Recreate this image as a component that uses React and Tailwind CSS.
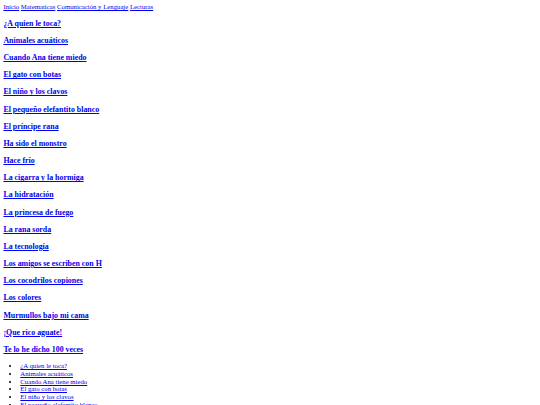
const lecturas = [
  '¿A quien le toca?',
  'Animales acuáticos',
  'Cuando Ana tiene miedo',
  'El gato con botas',
  'El niño y los clavos',
  'El pequeño elefantito blanco',
  'El príncipe rana',
  'Ha sido el monstro',
  'Hace frío',
  'La cigarra y la hormiga',
  'La hidratación',
  'La princesa de fuego',
  'La rana sorda',
  'La tecnología',
  'Los amigos se escriben con H',
  'Los cocodrilos copiones',
  'Los colores',
  'Murmullos bajo mi cama',
  '¡Que rico aguate!',
  'Te lo he dicho 100 veces',
];

const menu = ['Inicio', 'Matematicas', 'Comunicación y Lenguaje', 'Lecturas'];

export default function App() {
  return (
    <div className="min-h-[405px] bg-white p-[3.4px] font-['Liberation_Serif','Times_New_Roman',serif] text-black text-[6.75px] leading-[7.76px]">
      <nav className="flex gap-[1.7px]">
        {menu.map((item) => (
          <a key={item} href="#" className="text-[#0000ee] underline">
            {item}
          </a>
        ))}
      </nav>

      <div className="mt-[7.7px] flex flex-col gap-[8.07px]">
        {lecturas.map((titulo) => (
          <h3 key={titulo} className="text-[7.9px] leading-[9.1px] font-bold">
            <a href="#" className="text-[#0000ee] underline">
              {titulo}
            </a>
          </h3>
        ))}
      </div>

      <ul className="mt-[8.2px] list-disc pl-[16.9px]">
        {lecturas.map((titulo) => (
          <li key={titulo}>
            <a href="#" className="text-[#0000ee] underline">
              {titulo}
            </a>
          </li>
        ))}
      </ul>
    </div>
  );
}
